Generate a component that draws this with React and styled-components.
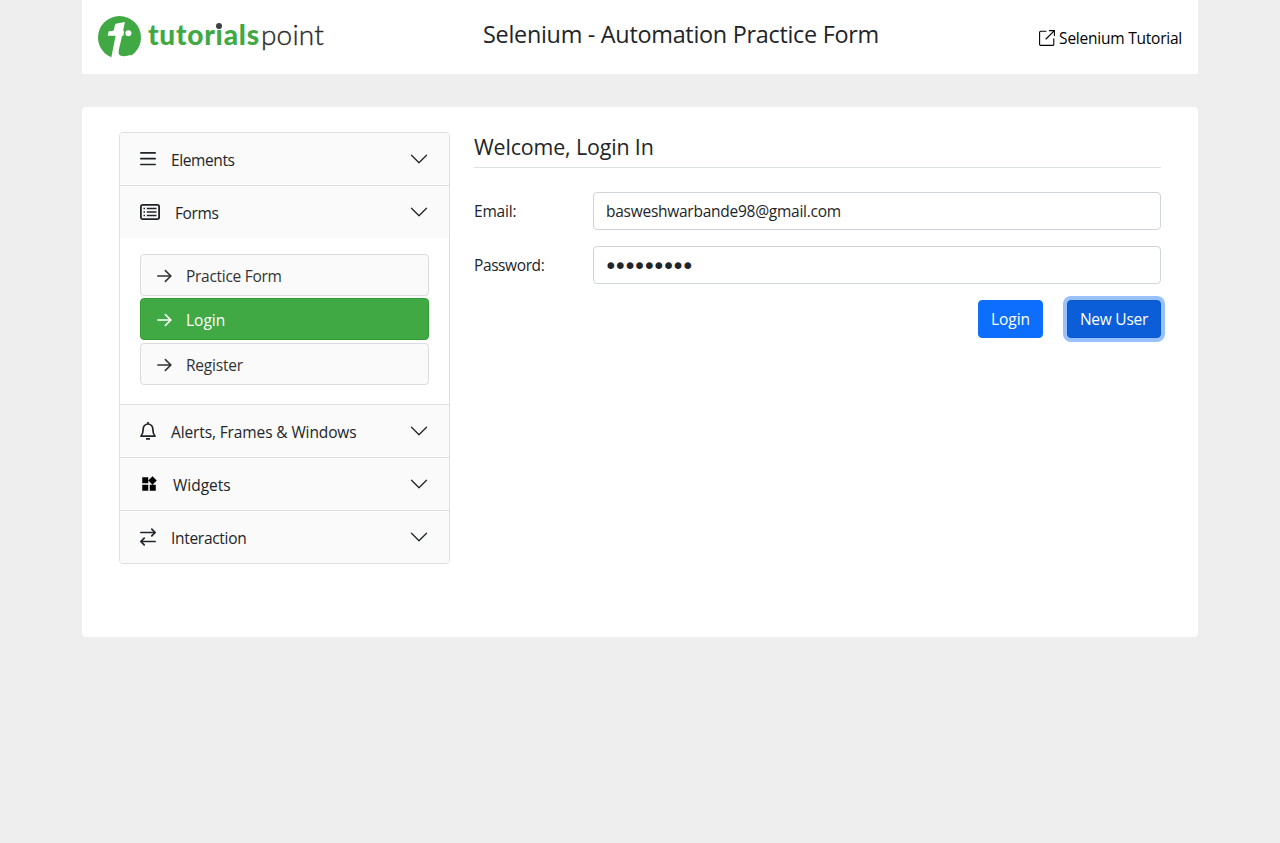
import React from 'react';
import styled, { createGlobalStyle } from 'styled-components';
import { BsChevronDown } from 'react-icons/bs';
import { MdWidgets } from 'react-icons/md';

const GlobalStyle = createGlobalStyle`
  *, *::before, *::after { box-sizing: border-box; }
  body {
    margin: 0;
    background: #eeeeee;
    color: #212529;
    font: 400 15.5px/24px "Open Sans", "Noto Sans", sans-serif;
  }
  h1, h2, p { margin: 0; font-weight: 400; }
  svg { display: block; flex: none; }
`;

const Container = styled.div`
  width: 1116px;
  margin: 0 auto;
`;

const Header = styled.header`
  display: flex;
  align-items: flex-start;
  height: 74px;
  padding: 16px 16px 0;
  background: #fff;
`;

const Brand = styled.a`
  display: flex;
  width: 385px;
`;

const Wordmark = styled.span`
  margin: 0 0 0 7px;
  font: 900 28px/36px "Lato", sans-serif;
  color: #41a944;
  white-space: nowrap;
  letter-spacing: 0.8px;
`;

const DarkDot = styled.span`
  position: relative;
  &::after {
    content: '';
    position: absolute;
    left: calc(50% - 3.2px);
    top: 6px;
    width: 6px;
    height: 6px;
    border-radius: 50%;
    background: #414042;
  }
`;

const WordmarkLight = styled.span`
  margin-left: 1px;
  font-weight: 300;
  letter-spacing: 0.2px;
  color: #2b2a2c;
  -webkit-text-stroke: 0.35px #2b2a2c;
`;

const Track = styled.span`
  letter-spacing: ${(p) => p.$em || '0'};
  white-space: nowrap;
`;

const Title = styled.h1`
  font-size: 23.4px;
  line-height: 36px;
`;

const TutorialLink = styled.a`
  display: flex;
  align-items: flex-start;
  gap: 4px;
  margin-left: auto;
  padding-top: 10px;
  color: #000;
  svg { margin-top: 4px; }
`;

const Card = styled.main`
  display: flex;
  align-items: flex-start;
  gap: 24px;
  height: 530px;
  margin-top: 33px;
  padding: 25px 37px;
  background: #fff;
  border-radius: 4px;
`;

const Accordion = styled.nav`
  width: 331px;
  border: 1px solid #dfdfdf;
  border-radius: 4px;
  overflow: hidden;
`;

const Section = styled.section`
  & + & { border-top: 1px solid #dfdfdf; }
`;

const SectionHead = styled.div`
  display: flex;
  align-items: center;
  height: 52px;
  padding: 0 20px;
  background: #fafafa;
`;

const SectionLabel = styled.span`
  margin: 2px auto 0 ${(p) => p.$gap}px;
`;

const SubList = styled.div`
  display: grid;
  grid-template-rows: 42px 42px 42px;
  row-gap: 2.4px;
  height: 166px;
  padding: 16px 20px 0;
`;

const SubItem = styled.a`
  display: flex;
  align-items: center;
  gap: 14px;
  padding: 0 16px;
  border: 1px solid ${(p) => (p.$active ? '#2f9e33' : '#dcdcdc')};
  border-radius: 4px;
  background: ${(p) => (p.$active ? '#41a944' : '#fafafa')};
  color: ${(p) => (p.$active ? '#fff' : '#333')};
  span { padding-top: 2px; }
  svg { margin-top: 2px; }
`;

const Form = styled.form`
  width: 687px;
`;

const FormTitle = styled.h2`
  height: 36px;
  margin-bottom: 24px;
  border-bottom: 1px solid #dee2e6;
  font-size: 21.4px;
  line-height: 30px;
`;

const Field = styled.label`
  display: flex;
  align-items: center;
  margin-bottom: 16px;
`;

const FieldLabel = styled.span`
  width: 119px;
`;

const Input = styled.input`
  flex: 1;
  height: 38px;
  padding: 0 12px;
  border: 1px solid #ced4da;
  border-radius: 4px;
  background: #fff;
  color: #212529;
  font: inherit;
  letter-spacing: ${(p) => p.$em || '0'};
  &[type='password'] {
    padding: 2px 12px 0 10px;
    font: 23px/24px "DejaVu Sans", sans-serif;
  }
`;

const Actions = styled.div`
  display: flex;
  justify-content: flex-end;
  gap: 24px;
`;

const Button = styled.button`
  width: ${(p) => p.$width}px;
  height: 38px;
  padding: 0;
  border: 1px solid ${(p) => (p.$focused ? '#0a58ca' : '#0d6efd')};
  border-radius: 4px;
  background: ${(p) => (p.$focused ? '#0b5ed7' : '#0d6efd')};
  box-shadow: ${(p) => (p.$focused ? '0 0 0 4px #98c1fe' : 'none')};
  color: #fff;
  font: inherit;
`;

const Logo = () => (
  <svg width="43" height="43" viewBox="0 0 43 43">
    <circle cx="21.5" cy="21.5" r="21.5" fill="#41a944" />
    <path fill="#fff" d="M9.700 19.700l1-4.500 4.600-.5c1.200-.8 1.100-6.500 2.600-7l9-1.700-1.800 8.700h1l-.7 5h-1.300L20.900 33.500c-.9 4.500.2 6.700 4.800 6.700 3 0 5-.6 7-1.600V43H12.900l.4-1.500L17.600 19.700z" />
    <circle cx="30.400" cy="17.200" r="3" fill="#fff" />
  </svg>
);

const ExternalIcon = () => (
  <svg width="16" height="16" viewBox="0 0 16 16" fill="none" stroke="#000" strokeWidth="1.100" strokeLinecap="round">
    <path d="M7 1.200H1.800A1.200 1.200 0 0 0 .6 2.400v11.800a1.200 1.200 0 0 0 1.200 1.200h11.800a1.200 1.200 0 0 0 1.200-1.200V8.800M10.400.6h5v5M15.400.6 7 9" />
  </svg>
);

const ListIcon = () => (
  <svg width="16" height="16" viewBox="0 0 16 16" stroke="#212529" strokeWidth="1.700" strokeLinecap="round">
    <path d="M.8 1.800h14.400M.8 7.700h14.400M.8 13.500h14.400" />
  </svg>
);

const FormIcon = () => (
  <svg width="20" height="16" viewBox="0 0 20 16" fill="none" stroke="#212529" strokeWidth="1.800">
    <rect x=".9" y=".9" width="18.200" height="14.200" rx="1.800" />
    <path d="M3.500 4.600H5M3.500 8H5M3.500 11.400H5M6.800 4.600h9.700M6.800 8h9.700M6.800 11.400h9.700" strokeWidth="1.500" />
  </svg>
);

const BellIcon = () => (
  <svg width="16" height="18" viewBox="0 0 16 18" fill="none" stroke="#212529" strokeWidth="1.700">
    <path d="M8 0v2M8 2a4.800 4.800 0 0 0-4.800 5c0 4-.7 5.500-2.200 7.200h14c-1.500-1.700-2.200-3.200-2.200-7.200A4.800 4.800 0 0 0 8 2zM6 16.800h4" strokeLinejoin="round" />
  </svg>
);

const SwapIcon = () => (
  <svg width="16" height="18" viewBox="0 0 16 18" fill="none" stroke="#212529" strokeWidth="1.700" strokeLinecap="round" strokeLinejoin="round">
    <path d="M.8 4.500h14.200M11.800 1.200 15.200 4.500l-3.400 3.300M15.200 13.500H1M4.200 10.200.8 13.500l3.400 3.300" />
  </svg>
);

const ArrowIcon = () => (
  <svg width="15" height="14" viewBox="0 0 15 14" fill="none" stroke="currentColor" strokeWidth="1.600" strokeLinecap="round" strokeLinejoin="round">
    <path d="M.8 7h13M8.400 1.600 13.900 7l-5.500 5.400" />
  </svg>
);

const sections = [
  { label: 'Elements', Icon: ListIcon, gap: 15, em: '-0.4px' },
  {
    label: 'Forms', Icon: FormIcon, gap: 15, em: '-0.4px',
    items: [
      { label: 'Practice Form', em: '-0.28px' },
      { label: 'Login', active: true },
      { label: 'Register', em: '-0.2px' },
    ],
  },
  { label: 'Alerts, Frames & Windows', Icon: BellIcon, gap: 15, em: '-0.12px' },
  { label: 'Widgets', Icon: () => <MdWidgets size={18} color="#000" />, gap: 15 },
  { label: 'Interaction', Icon: SwapIcon, gap: 15, em: '-0.3px' },
];

export default function App() {
  return (
    <Container>
      <GlobalStyle />
      <Header>
        <Brand>
          <Logo />
          <Wordmark>
            tutor<DarkDot>i</DarkDot>als<WordmarkLight>point</WordmarkLight>
          </Wordmark>
        </Brand>
        <Title><Track $em="-0.28px">Selenium - Automation Practice Form</Track></Title>
        <TutorialLink><ExternalIcon /><Track $em="-0.23px">Selenium Tutorial</Track></TutorialLink>
      </Header>
      <Card>
        <Accordion>
          {sections.map(({ label, Icon, gap, em, items }) => (
            <Section key={label}>
              <SectionHead>
                <Icon />
                <SectionLabel $gap={gap}><Track $em={em}>{label}</Track></SectionLabel>
                <BsChevronDown size={20} />
              </SectionHead>
              {items && (
                <SubList>
                  {items.map((item) => (
                    <SubItem key={item.label} $active={item.active}>
                      <ArrowIcon />
                      <Track $em={item.em}>{item.label}</Track>
                    </SubItem>
                  ))}
                </SubList>
              )}
            </Section>
          ))}
        </Accordion>
        <Form>
          <FormTitle><Track $em="-0.14px">Welcome, Login In</Track></FormTitle>
          <Field>
            <FieldLabel><Track $em="-0.2px">Email:</Track></FieldLabel>
            <Input type="text" defaultValue="basweshwarbande98@gmail.com" $em="-0.26px" />
          </Field>
          <Field>
            <FieldLabel><Track $em="-0.4px">Password:</Track></FieldLabel>
            <Input type="password" defaultValue="abcdefghi" $em="-3.95px" />
          </Field>
          <Actions>
            <Button type="button" $width={65}><Track>Login</Track></Button>
            <Button type="button" $width={94} $focused><Track $em="-0.25px">New User</Track></Button>
          </Actions>
        </Form>
      </Card>
    </Container>
  );
}
